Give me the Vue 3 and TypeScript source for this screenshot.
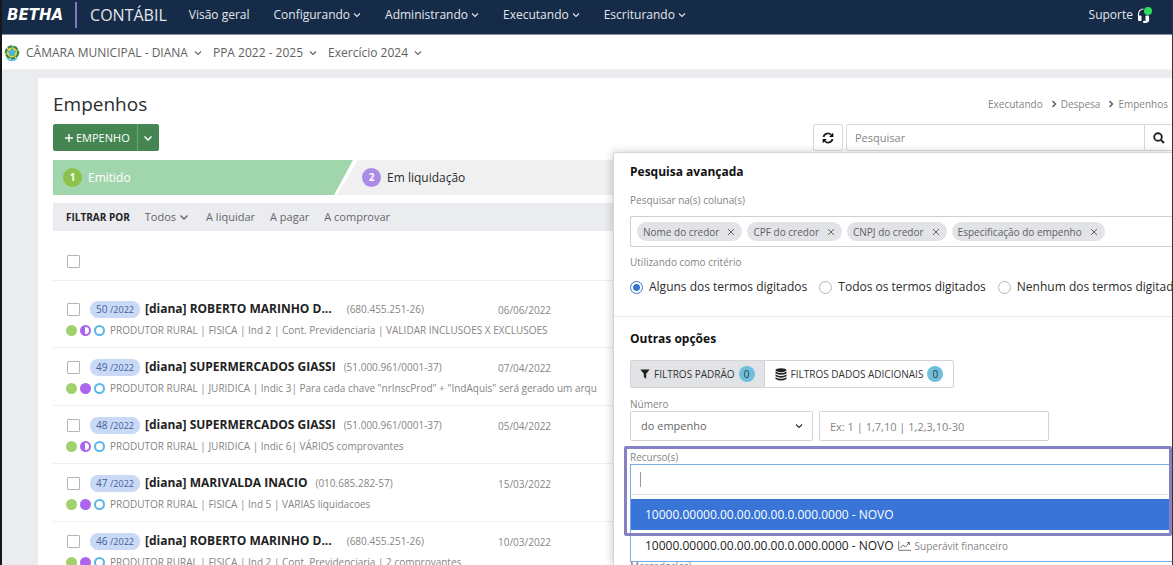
<script setup lang="ts">
import { ref } from 'vue'

interface Commitment {
  number: number
  year: number
  creditor: string
  cut: boolean
  document: string
  date: string
  description: string
  settled: 'half' | 'full'
}

const menus = ['Configurando', 'Administrando', 'Executando', 'Escriturando']
const contexts = ['CÂMARA MUNICIPAL - DIANA', 'PPA 2022 - 2025', 'Exercício 2024']
const quickFilters = ['A liquidar', 'A pagar', 'A comprovar']
const columns = ref(['Nome do credor', 'CPF do credor', 'CNPJ do credor', 'Especificação do empenho'])
const criteria = ['Alguns dos termos digitados', 'Todos os termos digitados', 'Nenhum dos termos digitados']
const criterion = ref(criteria[0])
const resourceCode = '10000.00000.00.00.00.00.0.000.0000 - NOVO'

const commitments: Commitment[] = [
  { number: 50, year: 2022, creditor: '[diana] ROBERTO MARINHO D...', cut: true, document: '680.455.251-26', date: '06/06/2022', description: 'PRODUTOR RURAL | FISICA | Ind 2 | Cont. Previdenciaria | VALIDAR INCLUSOES X EXCLUSOES', settled: 'half' },
  { number: 49, year: 2022, creditor: '[diana] SUPERMERCADOS GIASSI', cut: false, document: '51.000.961/0001-37', date: '07/04/2022', description: 'PRODUTOR RURAL | JURIDICA | Indic 3| Para cada chave "nrInscProd" + "IndAquis" será gerado um arqu', settled: 'full' },
  { number: 48, year: 2022, creditor: '[diana] SUPERMERCADOS GIASSI', cut: false, document: '51.000.961/0001-37', date: '05/04/2022', description: 'PRODUTOR RURAL | JURIDICA | Indic 6| VÁRIOS comprovantes', settled: 'half' },
  { number: 47, year: 2022, creditor: '[diana] MARIVALDA INACIO', cut: false, document: '010.685.282-57', date: '15/03/2022', description: 'PRODUTOR RURAL | FISICA | Ind 5 | VARIAS liquidacoes', settled: 'full' },
  { number: 46, year: 2022, creditor: '[diana] ROBERTO MARINHO D...', cut: true, document: '680.455.251-26', date: '10/03/2022', description: 'PRODUTOR RURAL | FISICA | Ind 2 | Cont. Previdenciaria | 2 comprovantes', settled: 'full' },
]

function removeColumn(name: string) {
  columns.value = columns.value.filter((c) => c !== name)
}
</script>

<template>
  <div class="page">
    <header class="topbar">
      <a class="brand" href="#">BETHA</a>
      <span class="product">CONTÁBIL</span>
      <nav class="menu">
        <a href="#">Visão geral</a>
        <a v-for="m in menus" :key="m" href="#">{{ m }}<svg class="chev" viewBox="0 0 8 8"><path d="M1 2.5 4 5.5 7 2.5" /></svg></a>
      </nav>
      <a class="support" href="#">Suporte
        <svg class="headset" viewBox="0 0 16 18">
          <path class="arc" d="M2.500 11V8.500a5 5 0 0 1 5-5.500" />
          <path class="arc" d="M12.500 11V14.500c0 1-1 1.500-3 1.500" />
          <rect x="2" y="9.500" width="3.500" height="5.500" rx="1" /><rect x="9.500" y="9.500" width="3.500" height="5.500" rx="1" /><rect x="7" y="14.800" width="4" height="2.200" rx="1" />
          <circle class="online" cx="12" cy="5" r="4" />
        </svg>
      </a>
    </header>

    <div class="contextbar">
      <svg class="crest" viewBox="0 0 16 18">
        <circle class="wreath" cx="8" cy="8.500" r="5.500" />
        <circle class="leaves" cx="8" cy="8.500" r="6.200" />
        <path class="star" d="M8 3 9.500 6.300 13 7.200 10.500 9.600 11 13 8 11.500 5 13 5.500 9.600 3 7.200 6.500 6.300Z" />
        <circle class="core" cx="8" cy="8.500" r="3" />
        <path class="ribbon" d="M3 14.500Q8 18.500 13 14.500" />
      </svg>
      <a v-for="c in contexts" :key="c" href="#">{{ c }}<svg class="chev" viewBox="0 0 8 8"><path d="M1 2.500 4 5.500 7 2.500" /></svg></a>
    </div>

    <main class="card">
      <div class="heading">
        <h1>Empenhos</h1>
        <nav class="crumbs">
          <a href="#">Executando</a><svg viewBox="0 0 6 8"><path d="M1.500 1 4.500 4 1.500 7" /></svg>
          <a href="#">Despesa</a><svg viewBox="0 0 6 8"><path d="M1.500 1 4.500 4 1.500 7" /></svg>
          <a href="#">Empenhos</a>
        </nav>
      </div>

      <div class="toolbar">
        <div class="split">
          <button type="button" class="new"><svg viewBox="0 0 10 10"><path d="M5 1V9M1 5H9" /></svg>EMPENHO</button>
          <button type="button" class="more" aria-label="Mais ações"><svg class="chev" viewBox="0 0 8 8"><path d="M.5 2.500 4 6 7.500 2.500" /></svg></button>
        </div>
        <div class="search">
          <button type="button" class="refresh" aria-label="Atualizar">
            <svg viewBox="0 0 12 12"><path class="line" d="M1.500 5A4.500 4.500 0 0 1 9.300 3M10.500 7A4.500 4.500 0 0 1 2.700 9" /><path d="M11.300.8V5H7.100ZM.7 11.200V7H4.900Z" /></svg>
          </button>
          <input type="search" placeholder="Pesquisar" aria-label="Pesquisar" />
          <button type="button" class="find" aria-label="Buscar">
            <svg viewBox="0 0 12 12"><circle cx="5" cy="5" r="3.800" /><path d="M8 8 11 11" /></svg>
          </button>
        </div>
      </div>

      <div class="steps">
        <button type="button" class="step current"><span class="count">1</span>Emitido</button>
        <button type="button" class="step next"><span class="count">2</span>Em liquidação</button>
      </div>

      <div class="filters">
        <strong>FILTRAR POR</strong>
        <a href="#" class="all">Todos<svg class="chev" viewBox="0 0 8 8"><path d="M.5 2.500 4 6 7.500 2.500" /></svg></a>
        <a v-for="f in quickFilters" :key="f" href="#">{{ f }}</a>
      </div>

      <div class="select-all"><input type="checkbox" aria-label="Selecionar todos" /></div>

      <ul class="rows">
        <li v-for="c in commitments" :key="c.number">
          <div class="main">
            <div class="who">
              <input type="checkbox" :aria-label="`Selecionar ${c.number}/${c.year}`" />
              <span class="pill">{{ c.number }} <small>/{{ c.year }}</small></span>
              <strong>{{ c.creditor }}</strong>
              <span class="doc" :class="{ spaced: c.cut }">({{ c.document }})</span>
            </div>
            <time>{{ c.date }}</time>
          </div>
          <div class="detail">
            <i class="dot green"></i><i class="dot purple" :class="c.settled"></i><i class="dot blue"></i>
            <span>{{ c.description }}</span>
          </div>
        </li>
      </ul>

      <section class="panel">
        <div class="block">
          <h2>Pesquisa avançada</h2>
          <span class="label">Pesquisar na(s) coluna(s)</span>
          <div class="tags">
            <span v-for="c in columns" :key="c" class="tag">{{ c }}
              <button type="button" :aria-label="`Remover ${c}`" @click="removeColumn(c)"><svg viewBox="0 0 8 8"><path d="M1 1 7 7M7 1 1 7" /></svg></button>
            </span>
          </div>
          <span class="label second">Utilizando como critério</span>
          <div class="radios">
            <label v-for="c in criteria" :key="c"><input v-model="criterion" type="radio" name="criterion" :value="c" />{{ c }}</label>
          </div>
        </div>

        <div class="block options">
          <h2>Outras opções</h2>
          <div class="tabs">
            <button type="button" class="active">
              <svg viewBox="0 0 10 10"><path d="M.3.500H9.700L6.200 4.700V9.800L3.800 8V4.700Z" /></svg>FILTROS PADRÃO<span class="badge">0</span>
            </button>
            <button type="button">
              <svg class="db" viewBox="0 0 12 13"><ellipse cx="6" cy="2.200" rx="5.500" ry="2" /><path d="M.5 3.500Q6 6.500 11.500 3.500V5.500Q6 8 .5 5.500ZM.5 6.500Q6 9.500 11.500 6.500V8.300Q6 11 .5 8.300ZM.5 9.300Q6 12.300 11.500 9.300V11Q6 14 .5 11Z" /></svg>FILTROS DADOS ADICIONAIS<span class="badge">0</span>
            </button>
          </div>
          <label class="label" for="number-kind">Número</label>
          <div class="number">
            <div class="select">
              <select id="number-kind"><option>do empenho</option><option>da liquidação</option></select>
              <svg class="chev" viewBox="0 0 8 8"><path d="M1 2.500 4 5.500 7 2.500" /></svg>
            </div>
            <input type="text" placeholder="Ex: 1 | 1,7,10 | 1,2,3,10-30" aria-label="Números" />
          </div>
          <div class="resource">
            <label class="label" for="resource">Recurso(s)</label>
            <div class="combo">
              <div class="entry"><input id="resource" type="text" /><i class="caret"></i></div>
              <ul>
                <li class="hit">{{ resourceCode }}</li>
                <li>{{ resourceCode }}
                  <svg viewBox="0 0 13 10"><path d="M.7 0V9.300H13M2.500 7 5 4 7.500 6 11 2" /><path class="tip" d="M8.500 1H12V4.500Z" /></svg>
                  <small>Superávit financeiro</small>
                </li>
              </ul>
            </div>
            <div class="highlight"></div>
          </div>
          <span class="label marker">Marcador(es)</span>
        </div>
      </section>
    </main>
  </div>
</template>

<style>
body {
  background: #ebecf0;
}
</style>

<style scoped>
* {
  box-sizing: border-box;
}
.page {
  height: 100vh;
  overflow: hidden;
  display: flex;
  flex-direction: column;
  border-left: 2px solid #161719;
  border-right: 1px solid #34363a;
  background: #ebecf0;
  color: #2c2c2c;
  font: 11px/16px "Open Sans", "Noto Sans", sans-serif;
  white-space: nowrap;
}
a {
  color: inherit;
  text-decoration: none;
}
button,
input,
select {
  font: inherit;
  color: inherit;
  margin: 0;
}
button {
  border: 0;
  padding: 0;
  background: none;
  cursor: pointer;
}
ul {
  list-style: none;
  margin: 0;
  padding: 0;
}
h1,
h2 {
  margin: 0;
}
svg {
  flex: none;
}
.chev {
  width: 8px;
  height: 8px;
  fill: none;
  stroke: currentColor;
  stroke-width: 1.1;
}
.topbar {
  flex: none;
  height: 35px;
  display: flex;
  align-items: center;
  padding: 0 20px 5px 5px;
  background: #162b47;
  border-bottom: 1px solid #8290ab;
  color: #e3e7ed;
  font-size: 12px;
}
.brand {
  color: #fff;
  font-family: "DejaVu Sans", sans-serif;
  font-size: 15px;
  font-weight: 700;
  font-style: italic;
  padding-right: 12px;
}
.product {
  border-left: 2px solid #8478c4;
  padding-left: 13px;
  font-size: 16px;
  line-height: 26px;
}
.menu {
  display: flex;
  gap: 24px;
  margin-left: 22px;
}
.menu .chev {
  margin-left: 3px;
}
.support {
  display: flex;
  align-items: center;
  gap: 3px;
  margin-left: auto;
}
.headset {
  width: 16px;
  height: 18px;
  fill: #fff;
}
.headset .arc {
  fill: none;
  stroke: #fff;
  stroke-width: 1.2;
}
.headset .online {
  fill: #2fdc5b;
}
.contextbar {
  flex: none;
  height: 35px;
  display: flex;
  align-items: center;
  gap: 11px;
  padding: 1px 0 0 2px;
  background: #fff;
  border-bottom: 1px solid #f3f4f6;
  color: #616161;
  font-size: 12px;
}
.contextbar .chev {
  margin-left: 6px;
}
.crest {
  width: 16px;
  height: 18px;
  margin-right: -5px;
}
.wreath {
  fill: #f1d24b;
  stroke: #dcab27;
}
.leaves {
  fill: none;
  stroke: #2f8a4a;
  stroke-width: 2.2;
  stroke-dasharray: 5 1;
}
.star {
  fill: #68b957;
}
.core {
  fill: #46b7e8;
}
.ribbon {
  fill: none;
  stroke: #61c5e6;
  stroke-width: 1.5;
}
.card {
  position: relative;
  flex: 1 0 auto;
  margin: 8px 0 0 36px;
  padding: 12px 0 0 15px;
  background: #fff;
}
.heading {
  display: flex;
  align-items: center;
  justify-content: space-between;
  height: 28px;
  padding-right: 4px;
}
h1 {
  font-size: 19px;
  font-weight: 400;
  line-height: 28px;
}
.crumbs {
  display: flex;
  align-items: center;
  gap: 4px;
  color: #858585;
  font-size: 10px;
}
.crumbs svg {
  width: 6px;
  height: 8px;
  margin-left: 4px;
  fill: none;
  stroke: #555;
  stroke-width: 1.4;
}
.toolbar {
  display: flex;
  justify-content: space-between;
  margin-top: 6px;
}
.split {
  display: flex;
  height: 27px;
  border-radius: 2px;
  overflow: hidden;
  background: #448552;
  color: #fff;
}
.new {
  display: flex;
  align-items: center;
  gap: 2px;
  padding: 0 7px 0 11px;
}
.new svg {
  width: 10px;
  height: 10px;
  stroke: #fff;
  stroke-width: 1.4;
}
.more {
  width: 22px;
  border-left: 1px solid #6ba277;
}
.more .chev {
  stroke-width: 1.5;
}
.search {
  display: flex;
  height: 27px;
}
.refresh {
  width: 30px;
  border: 1px solid #d9d9d9;
  border-radius: 2px;
}
.refresh svg,
.find svg {
  width: 12px;
  height: 12px;
  display: block;
  margin: 0 auto;
}
.refresh .line {
  fill: none;
  stroke: #222;
  stroke-width: 1.8;
}
.search input {
  width: 299px;
  margin-left: 3px;
  padding: 0 8px;
  border: 1px solid #d9d9d9;
  border-radius: 2px 0 0 2px;
  background: #fff;
  outline: 0;
}
input::placeholder {
  color: #858585;
  opacity: 1;
}
.find {
  width: 27px;
  border: solid #d9d9d9;
  border-width: 1px 0;
}
.find svg {
  fill: none;
  stroke: #222;
  stroke-width: 1.9;
}
.steps {
  display: flex;
  height: 35px;
  margin-top: 9px;
  font-size: 12px;
}
.step {
  display: flex;
  align-items: center;
  gap: 6px;
  padding-left: 10px;
}
.count {
  width: 19px;
  height: 19px;
  border-radius: 50%;
  color: #fff;
  font-size: 10px;
  font-weight: 700;
  line-height: 19px;
  text-align: center;
}
.current {
  width: 300px;
  background: #a1d6ac;
  clip-path: polygon(0 0, 100% 0, 281px 100%, 0 100%);
  color: #fff;
}
.current .count {
  background: #8bc34a;
}
.next {
  flex: 1;
  margin-left: -16px;
  padding-left: 25px;
  background: #f0f0f0;
  clip-path: polygon(21px 0, 100% 0, 100% 100%, 0 100%);
}
.next .count {
  background: #aa8be6;
}
.filters {
  display: flex;
  align-items: center;
  gap: 15px;
  height: 28px;
  margin-top: 8px;
  padding-left: 13px;
  background: #ebecf0;
  color: #666;
}
.filters strong {
  color: #222;
  font-size: 10px;
}
.all {
  margin-right: 3px;
}
.all .chev {
  margin-left: 4px;
  stroke-width: 1.4;
}
input[type="checkbox"] {
  appearance: none;
  flex: none;
  width: 13px;
  height: 13px;
  border: 1px solid #b5b5b5;
  border-radius: 1px;
  background: #fff;
}
.select-all {
  display: flex;
  height: 50px;
  padding: 24px 14px 0;
  border-bottom: 1px solid #f0f0f0;
}
.rows {
  padding-top: 9px;
}
.rows li {
  height: 58px;
  padding: 9px 14px 0;
  border-bottom: 1px solid #f0f0f0;
}
.main {
  display: grid;
  grid-template-columns: 431px 1fr;
  align-items: center;
  height: 20px;
}
.who {
  display: flex;
  align-items: center;
}
.pill {
  margin: 0 5px 0 10px;
  padding: 0 6px;
  border-radius: 8px;
  background: #c9d9f6;
  color: #44609c;
  font-size: 10px;
}
.pill small {
  font-size: 9px;
}
.who strong {
  color: #222;
  font-size: 12px;
}
.doc {
  margin-left: 8px;
  color: #858585;
  font-size: 10px;
}
.doc.spaced {
  margin-left: 15px;
}
.main time {
  padding-top: 2px;
  color: #858585;
  font-size: 10px;
}
.detail {
  display: flex;
  align-items: center;
  height: 22px;
  color: #858585;
  font-size: 10px;
}
.detail span {
  margin-left: 2px;
}
.dot {
  width: 11px;
  height: 11px;
  margin-right: 3px;
  border-radius: 50%;
}
.detail .green {
  margin-left: -1px;
}
.green {
  background: #a0d16c;
}
.purple {
  border: 2px solid #aa66ee;
  background: #aa66ee;
}
.purple.half {
  background: linear-gradient(90deg, #aa66ee 50%, #fff 50%);
}
.blue {
  border: 2px solid #58b7e6;
}
.panel {
  position: absolute;
  top: 74px;
  right: 0;
  width: 559px;
  height: calc(100vh - 152px);
  overflow: hidden;
  border: solid #d6d6d6;
  border-width: 1px 0 0 1px;
  border-radius: 3px 0 0 0;
  background: #fff;
  box-shadow: -1px 0 8px rgba(0, 0, 0, 0.2);
}
.block {
  padding: 10px 0 0 16px;
}
.block h2 {
  color: #111;
  font-size: 12px;
  line-height: 18px;
}
.label {
  display: block;
  color: #858585;
  font-size: 10px;
  line-height: 14px;
}
h2 + .label {
  margin-top: 12px;
}
.tags {
  display: flex;
  align-items: center;
  gap: 5px;
  height: 31px;
  margin-top: 9px;
  padding-left: 6px;
  border: 1px solid #d0d0d0;
  border-right: 0;
  border-radius: 2px 0 0 2px;
}
.tag {
  display: flex;
  align-items: center;
  gap: 8px;
  height: 19px;
  padding: 0 7px 0 6px;
  border-radius: 10px;
  background: #e2e3e7;
  color: #616161;
  font-size: 10px;
}
.tag svg {
  display: block;
  width: 8px;
  height: 8px;
  stroke: #666;
}
.second {
  margin-top: 8px;
}
.radios {
  display: flex;
  gap: 12px;
  height: 47px;
  padding-top: 10px;
  font-size: 12px;
}
.radios label {
  display: flex;
  align-items: center;
  gap: 6px;
  height: 16px;
}
.radios input {
  appearance: none;
  flex: none;
  width: 13px;
  height: 13px;
  border: 1px solid #b5b5b5;
  border-radius: 50%;
  background: #fff;
}
.radios input:checked {
  border-color: #3875c9;
  background: radial-gradient(circle, #3875c9 3px, #fff 4px);
}
.options {
  padding-top: 13px;
  border-top: 1px solid #e8e8e8;
}
.tabs {
  display: flex;
  width: max-content;
  height: 28px;
  margin: 12px 0 9px;
  border: 1px solid #d3d3d3;
  border-radius: 2px;
}
.tabs button {
  display: flex;
  align-items: center;
  gap: 4px;
  padding: 0 9px;
  color: #333;
  font-size: 10px;
}
.tabs button + button {
  padding: 0 10px;
  border-left: 1px solid #d3d3d3;
}
.tabs .active {
  background: #e2e3e7;
}
.tabs svg {
  width: 10px;
  height: 10px;
  fill: #222;
}
.tabs .db {
  width: 12px;
  height: 13px;
}
.badge {
  width: 16px;
  border-radius: 50%;
  background: #70c0dc;
  line-height: 16px;
  text-align: center;
}
.number {
  display: flex;
  gap: 6px;
}
.select {
  display: flex;
  align-items: center;
}
.select select,
.number input {
  height: 30px;
  border: 1px solid #d3d3d3;
  border-radius: 2px;
  background: #fff;
  color: #666;
  padding: 0 10px;
}
.select select {
  appearance: none;
  width: 183px;
}
.select .chev {
  margin-left: -18px;
  margin-right: 10px;
  pointer-events: none;
}
.number input {
  width: 230px;
}
.resource {
  position: relative;
  margin-top: 9px;
}
.combo {
  border: solid #7ba9e4;
  border-width: 1px 0 1px 1px;
  background: #fff;
}
.entry {
  position: relative;
  margin-bottom: 4px;
  border-bottom: 1px solid #e5e5e5;
}
.entry input {
  display: block;
  width: 100%;
  height: 29px;
  padding: 0 9px;
  border: 0;
  outline: 0;
  background: none;
}
.caret {
  position: absolute;
  top: 7px;
  left: 9px;
  width: 1px;
  height: 15px;
  background: #999;
}
.combo li {
  display: flex;
  align-items: center;
  gap: 4px;
  height: 31px;
  padding-left: 14px;
  color: #222;
  font-size: 12px;
}
.combo .hit {
  background: #3875d7;
  color: #fff;
}
.combo svg {
  width: 13px;
  height: 10px;
  fill: none;
  stroke: #777;
}
.combo .tip {
  fill: #777;
  stroke: none;
}
.combo small {
  color: #858585;
  font-size: 10px;
}
.marker {
  margin-top: -3px;
}
.highlight {
  position: absolute;
  top: -4px;
  right: 0;
  left: -6px;
  height: 90px;
  border: 3px solid #8582c4;
  border-radius: 2px;
  pointer-events: none;
}
</style>
